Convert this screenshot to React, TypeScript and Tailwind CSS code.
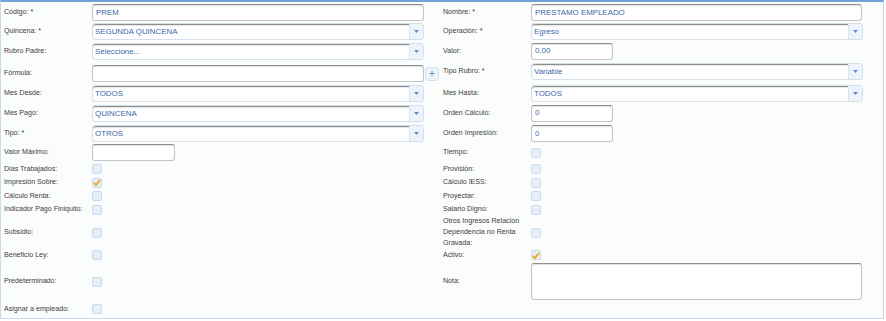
import React from "react";

const font = { fontFamily: '"Liberation Sans", Arial, sans-serif' };

function Label({ children }: { children: React.ReactNode }) {
  return (
    <div className="w-[91px] shrink-0 pl-[3px] text-[7.1px] leading-[11px] text-[#404040]">
      {children}
    </div>
  );
}

function TextInput({ value = "", w = "w-[332px]" }: { value?: string; w?: string }) {
  return (
    <div
      className={`${w} h-[17px] flex items-center rounded-[3px] border border-[#c4c4c4] border-t-[#8e8e8e] bg-white px-[3px] text-[7.9px] text-[#3a67a8] shadow-[inset_0_1px_1px_rgba(0,0,0,0.12)]`}
    >
      {value}
    </div>
  );
}

function Select({ value = "" }: { value?: string }) {
  return (
    <div className="w-[332px] h-[17px] flex rounded-[3px] border border-[#d3dfeb] bg-white">
      <div className="flex-1 flex items-center rounded-l-[3px] border-t border-[#8e8e8e] px-[2px] text-[7.9px] text-[#3a67a8] shadow-[inset_0_1px_1px_rgba(0,0,0,0.1)]">
        {value}
      </div>
      <div className="w-[14px] flex items-center justify-center rounded-r-[3px] bg-[#edf3fa] border-l border-[#d8e4ef]">
        <svg width="5" height="3" viewBox="0 0 5 3">
          <path d="M0 0 L5 0 L2.5 3 Z" fill="#5b8fc7" />
        </svg>
      </div>
    </div>
  );
}

function Check({ checked = false }: { checked?: boolean }) {
  return (
    <div className="w-[10px] h-[10px] rounded-[2px] border border-[#cbdaea] bg-[#e6eef8] flex items-center justify-center">
      {checked && (
        <svg width="8" height="7" viewBox="0 0 8 7">
          <path d="M1 4 L3 6 L7 1" fill="none" stroke="#f2a41c" strokeWidth="1.8" />
        </svg>
      )}
    </div>
  );
}

function Row({ h, left, right }: { h: string; left: React.ReactNode; right: React.ReactNode }) {
  return (
    <div className={`${h} grid grid-cols-[439px_443px]`}>
      <div className="flex items-center">{left}</div>
      <div className="flex items-center">{right}</div>
    </div>
  );
}

export default function App() {
  return (
    <div className="w-[886px] h-[321px] bg-white" style={font}>
      <div className="w-[884px] h-[319px] border border-[#c9dbeb] border-t-2 border-t-[#6fa3d8] bg-[#fbfcfc] pt-[1px]">
        <Row
          h="h-[19px]"
          left={<><Label>Código: *</Label><TextInput value="PREM" /></>}
          right={<><Label>Nombre: *</Label><TextInput value="PRESTAMO EMPLEADO" w="w-[331px]" /></>}
        />
        <Row
          h="h-[18px]"
          left={<><Label>Quincena: *</Label><Select value="SEGUNDA QUINCENA" /></>}
          right={<><Label>Operación: *</Label><Select value="Egreso" /></>}
        />
        <Row
          h="h-[22px]"
          left={<><Label>Rubro Padre:</Label><Select value="Seleccione..." /></>}
          right={<><Label>Valor:</Label><TextInput value="0.00" w="w-[82px]" /></>}
        />
        <Row
          h="h-[22px]"
          left={
            <>
              <Label>Fórmula:</Label>
              <TextInput />
              <div className="ml-[1px] w-[14px] h-[14px] mt-[2px] rounded-[3px] border border-[#d3dfeb] bg-[#edf3fa] flex items-center justify-center text-[10px] leading-none text-[#5b8fc7]">
                +
              </div>
            </>
          }
          right={
            <div className="flex items-center -mt-[3px]">
              <Label>Tipo Rubro: *</Label>
              <Select value="Variable" />
            </div>
          }
        />
        <Row
          h="h-[18px]"
          left={<><Label>Mes Desde:</Label><Select value="TODOS" /></>}
          right={<><Label>Mes Hasta:</Label><Select value="TODOS" /></>}
        />
        <Row
          h="h-[22px]"
          left={<><Label>Mes Pago:</Label><Select value="QUINCENA" /></>}
          right={<><Label>Orden Cálculo:</Label><TextInput value="0" w="w-[82px]" /></>}
        />
        <Row
          h="h-[19px]"
          left={<><Label>Tipo: *</Label><Select value="OTROS" /></>}
          right={<><Label>Orden Impresión:</Label><TextInput value="0" w="w-[82px]" /></>}
        />
        <Row
          h="h-[19px]"
          left={<><Label>Valor Máximo:</Label><TextInput w="w-[83px]" /></>}
          right={<><Label>Tiempo:</Label><Check /></>}
        />
        <Row
          h="h-[14px]"
          left={<><Label>Dias Trabajados:</Label><Check /></>}
          right={<><Label>Provisión:</Label><Check /></>}
        />
        <Row
          h="h-[13px]"
          left={<><Label>Impresión Sobre:</Label><Check checked /></>}
          right={<><Label>Cálculo IESS:</Label><Check /></>}
        />
        <Row
          h="h-[14px]"
          left={<><Label>Cálculo Renta:</Label><Check /></>}
          right={<><Label>Proyectar:</Label><Check /></>}
        />
        <Row
          h="h-[13px]"
          left={<><Label>Indicador Pago Finiquito:</Label><Check /></>}
          right={<><Label>Salario Digno:</Label><Check /></>}
        />
        <Row
          h="h-[32px]"
          left={<><Label>Subsidio:</Label><Check /></>}
          right={
            <>
              <Label>
                Otros Ingresos Relacion
                <br />
                Dependencia no Renta
                <br />
                Gravada:
              </Label>
              <Check />
            </>
          }
        />
        <Row
          h="h-[14px]"
          left={<><Label>Beneficio Ley:</Label><Check /></>}
          right={<><Label>Activo:</Label><Check checked /></>}
        />
        <Row
          h="h-[39px]"
          left={<><Label>Predeterminado:</Label><Check /></>}
          right={
            <>
              <Label>Nota:</Label>
              <div className="w-[331px] h-[37px] rounded-[3px] border border-[#c4c4c4] border-t-[#8e8e8e] bg-white shadow-[inset_0_1px_1px_rgba(0,0,0,0.12)]" />
            </>
          }
        />
        <Row
          h="h-[16px]"
          left={<><Label>Asignar a empleado:</Label><Check /></>}
          right={<div />}
        />
      </div>
    </div>
  );
}
